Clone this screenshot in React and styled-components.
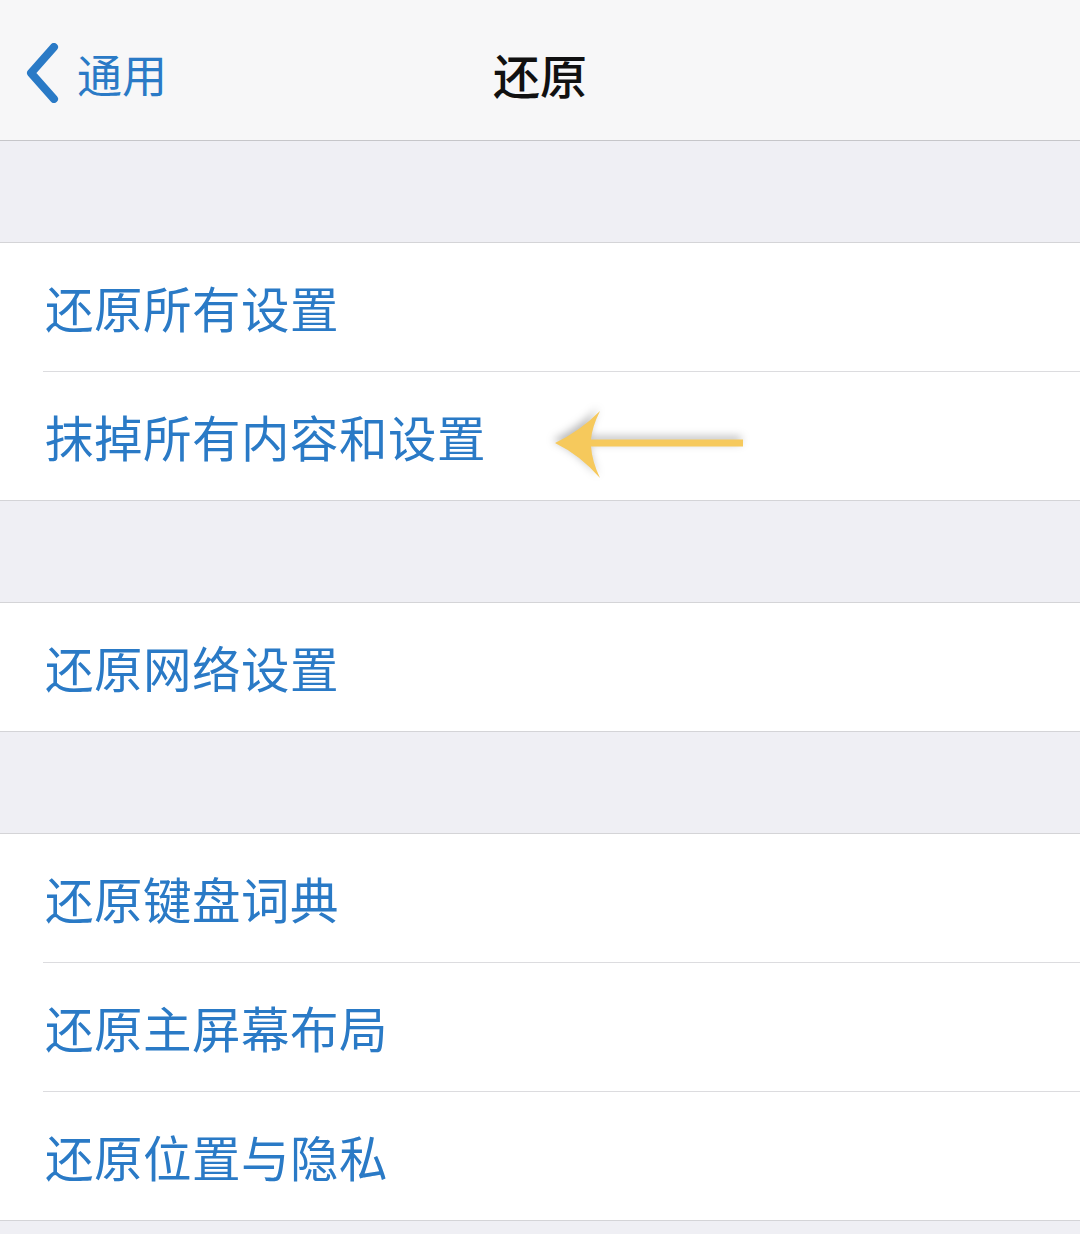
import React from 'react';
import styled, { createGlobalStyle } from 'styled-components';

const GlobalStyle = createGlobalStyle`
  html, body {
    margin: 0;
    padding: 0;
    background: #efeff4;
    font-family: "Noto Sans CJK SC", "Noto Sans", sans-serif;
  }
`;

const Page = styled.div`
  width: 1080px;
  min-height: 1234px;
  background: #efeff4;
`;

const NavBar = styled.div`
  height: 140px;
  background: #f7f7f8;
  border-bottom: 1px solid #c6c6c9;
  display: flex;
  align-items: center;
  position: relative;
`;

const BackButton = styled.div`
  display: flex;
  align-items: center;
  gap: 18px;
  padding-left: 25px;
  color: #2a7ac6;
  font-size: 45px;
  line-height: 1;
  margin-top: 6px;
`;

const Title = styled.div`
  position: absolute;
  left: 0;
  right: 0;
  text-align: center;
  font-size: 47px;
  font-weight: 500;
  color: #111;
  pointer-events: none;
  margin-top: 6px;
`;

const Gap = styled.div`
  height: 101px;
`;

const Group = styled.div`
  background: #fff;
  border-top: 1px solid #d4d4d7;
  border-bottom: 1px solid #d4d4d7;
`;

const Row = styled.div`
  height: 128px;
  margin-left: 43px;
  display: flex;
  align-items: center;
  position: relative;
  border-bottom: ${p => (p.$last ? 'none' : '1px solid #dcdcdf')};
`;

const Label = styled.span`
  margin-left: 2px;
  font-size: 48.5px;
  color: #2a7ac6;
  letter-spacing: 0.5px;
  line-height: 1;
`;

const Arrow = styled.svg`
  position: absolute;
  left: 507px;
  top: 5px;
  overflow: visible;
  filter: drop-shadow(-2px -3px 4px rgba(0, 0, 0, 0.28));
`;

const Chevron = () => (
  <svg width="34" height="60" viewBox="0 0 34 60">
    <path d="M29 4 L6 30 L29 56" fill="none" stroke="#2a7ac6" strokeWidth="8" strokeLinecap="round" strokeLinejoin="round" />
  </svg>
);

const YellowArrow = () => (
  <Arrow width="200" height="120" viewBox="0 0 200 120">
    <path d="M5 66 Q30 54 50 34 Q42 50 41 62.5 L193 62.5 L193 69.5 L41 69.5 Q42 84 50 101 Q30 78 5 66 Z" fill="#f6c95c" />
  </Arrow>
);

const groups = [
  ['还原所有设置', '抹掉所有内容和设置'],
  ['还原网络设置'],
  ['还原键盘词典', '还原主屏幕布局', '还原位置与隐私'],
];

export default function App() {
  return (
    <Page>
      <GlobalStyle />
      <NavBar>
        <BackButton>
          <Chevron />
          <span>通用</span>
        </BackButton>
        <Title>还原</Title>
      </NavBar>
      {groups.map((items, gi) => (
        <React.Fragment key={gi}>
          <Gap />
          <Group>
            {items.map((label, i) => (
              <Row key={label} $last={i === items.length - 1}>
                <Label>{label}</Label>
                {label === '抹掉所有内容和设置' && <YellowArrow />}
              </Row>
            ))}
          </Group>
        </React.Fragment>
      ))}
    </Page>
  );
}
